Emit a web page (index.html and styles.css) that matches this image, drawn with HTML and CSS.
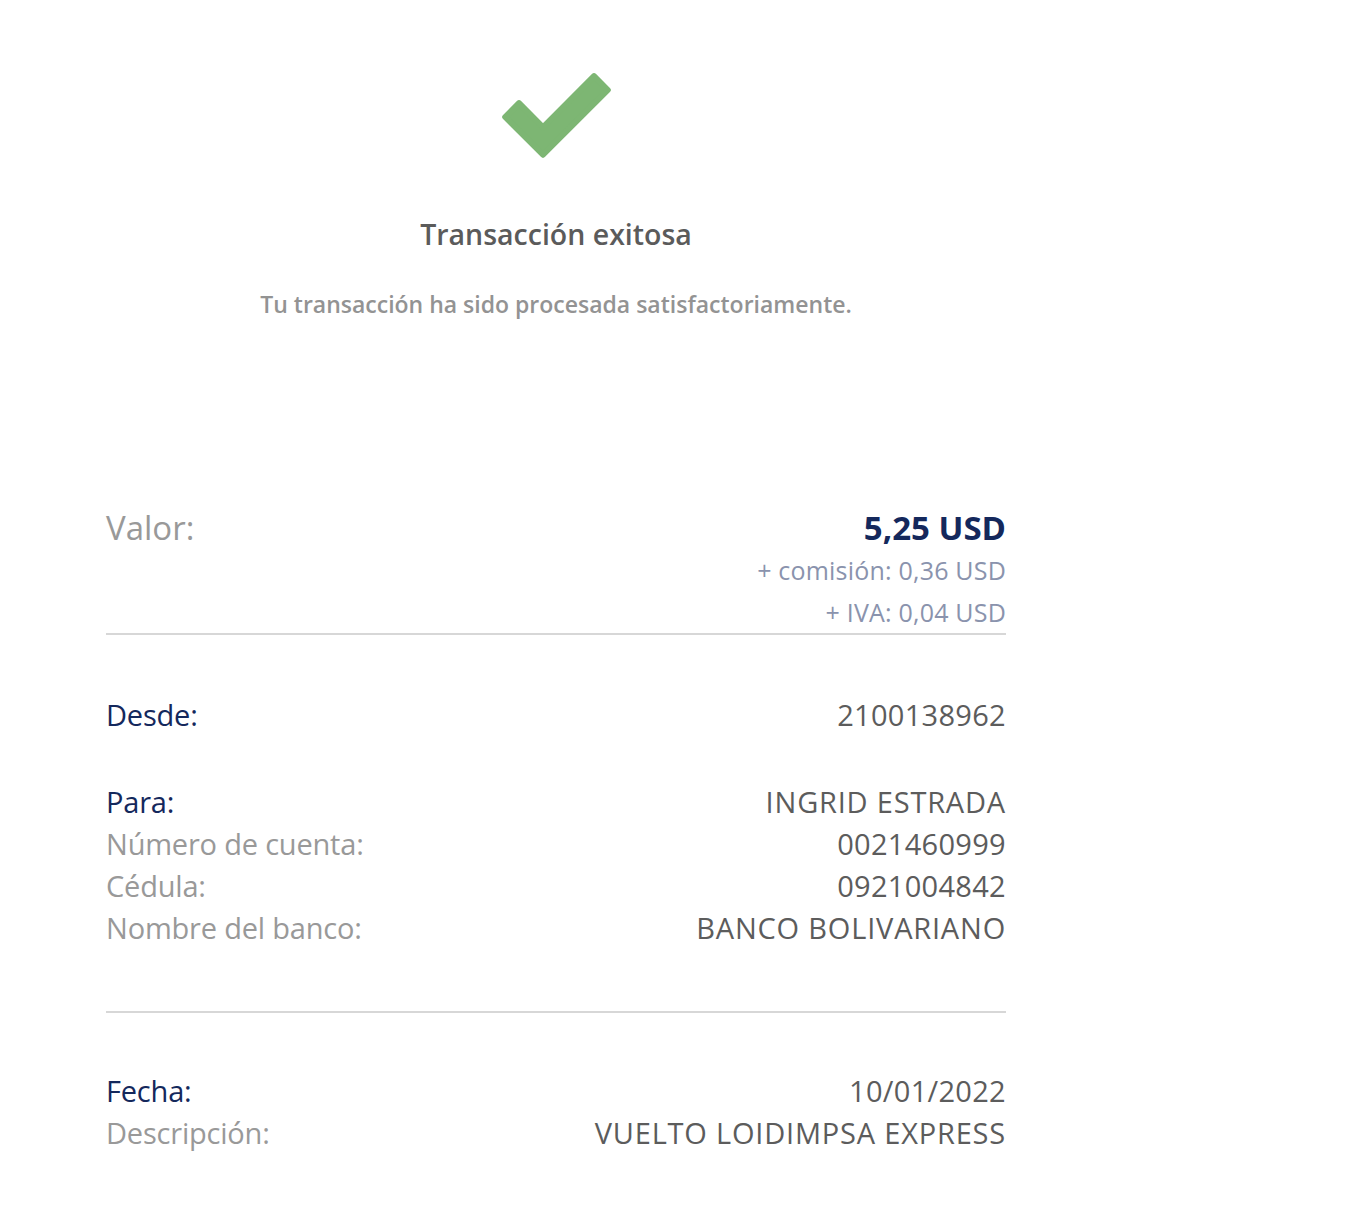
FILE: index.html
```html
<!DOCTYPE html>
<html lang="es">
<head>
<meta charset="utf-8">
<title>Transacción exitosa</title>
<link rel="stylesheet" href="styles.css">
</head>
<body>
<main class="receipt">
  <header class="result">
    <svg class="check" width="112" height="90" viewBox="500 72 112 90" aria-hidden="true">
      <polygon points="505.2,117 543,154.7 607.8,90 594,76.2 543,127.3 519,103.2" fill="#7db673" stroke="#7db673" stroke-width="6" stroke-linejoin="round"/>
    </svg>
    <h1 class="result-title">Transacción exitosa</h1>
    <p class="result-text">Tu transacción ha sido procesada satisfactoriamente.</p>
  </header>

  <section class="section amount">
    <div class="amount-label">Valor:</div>
    <div class="amount-values">
      <div class="amount-main">5,25 USD</div>
      <div class="amount-extra">+ comisión: 0,36 USD</div>
      <div class="amount-extra">+ IVA: 0,04 USD</div>
    </div>
  </section>

  <section class="section details">
    <div class="row"><span class="key key-main">Desde:</span><span class="val">2100138962</span></div>
    <div class="group">
      <div class="row"><span class="key key-main">Para:</span><span class="val val-caps">INGRID ESTRADA</span></div>
      <div class="row"><span class="key">Número de cuenta:</span><span class="val">0021460999</span></div>
      <div class="row"><span class="key">Cédula:</span><span class="val">0921004842</span></div>
      <div class="row"><span class="key">Nombre del banco:</span><span class="val val-caps">BANCO BOLIVARIANO</span></div>
    </div>
  </section>

  <section class="section details last">
    <div class="row"><span class="key key-main">Fecha:</span><span class="val">10/01/2022</span></div>
    <div class="row"><span class="key">Descripción:</span><span class="val val-caps">VUELTO LOIDIMPSA EXPRESS</span></div>
  </section>
</main>
</body>
</html>
```

FILE: styles.css
```css
html, body {
  margin: 0;
  padding: 0;
  background: #ffffff;
}

body {
  font-family: "Open Sans", "Noto Sans", sans-serif;
  color: #5c5c5c;
}

.receipt {
  width: 900px;
  margin-left: 106px;
}

.result {
  display: flex;
  flex-direction: column;
  align-items: center;
  padding-top: 72px;
}

.check {
  display: block;
}

.result-title {
  margin: 52px 0 0;
  font-size: 28.5px;
  font-weight: 600;
  line-height: 40px;
  color: #5b5b5b;
}

.result-text {
  margin: 35px 0 0;
  font-size: 23px;
  font-weight: 600;
  line-height: 30px;
  color: #939393;
}

.section {
  border-bottom: 2px solid #d7d7d7;
}

.amount {
  margin-top: 188px;
  display: flex;
  justify-content: space-between;
  align-items: flex-start;
}

.amount-label {
  font-size: 33px;
  line-height: 42px;
  color: #999999;
}

.amount-values {
  display: flex;
  flex-direction: column;
  align-items: flex-end;
}

.amount-main {
  font-size: 33px;
  line-height: 42px;
  font-weight: 700;
  color: #14285c;
}

.amount-extra {
  font-size: 25px;
  line-height: 42px;
  color: #8a93ad;
  letter-spacing: 0.2px;
}

.details {
  padding: 59px 0 62px;
}

.details.last {
  padding-top: 57px;
  border-bottom: none;
}

.group {
  margin-top: 45px;
}

.row {
  display: flex;
  justify-content: space-between;
  align-items: baseline;
  font-size: 29px;
  line-height: 42px;
}

.key {
  color: #999999;
  letter-spacing: -0.2px;
}

.key-main {
  color: #14285c;
}

.val {
  color: #5c5c5c;
  letter-spacing: 0.3px;
}

.val-caps {
  letter-spacing: 0.8px;
}
```
